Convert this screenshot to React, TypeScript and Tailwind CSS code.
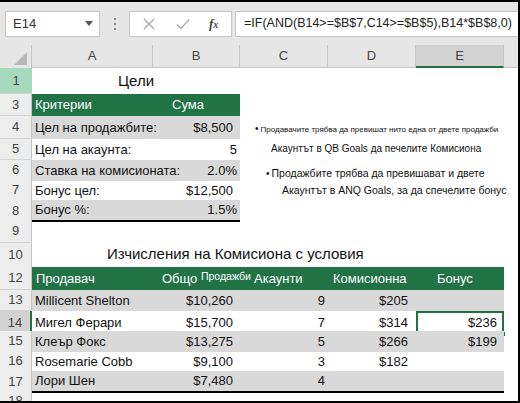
import React from "react";

const FONT = "font-['Liberation_Sans',Arial,sans-serif]";
const GRAY = "bg-[#d9d9d9]";

type HeadKind = "none" | "green" | "sel";

function RowHead({ n, kind = "none" }: { n: number | string; kind?: HeadKind }) {
  const bg =
    kind === "green" ? "bg-[#a6d9bd]" : kind === "sel" ? "bg-[#d2d2d2] border-r-2 border-r-[#217346]" : "bg-[#ededed] border-r border-r-[#c6c6c6]";
  return (
    <div className={`flex items-center justify-center border-b border-b-[#d4d4d4] text-[13px] text-[#444] ${bg}`}>
      {n}
    </div>
  );
}

function Row({ n, h, kind, children }: { n: number | string; h: string; kind?: HeadKind; children?: React.ReactNode }) {
  return (
    <div className={`grid grid-cols-[32px_472px_1fr] ${h}`}>
      <RowHead n={n} kind={kind} />
      <div className="relative flex">{children}</div>
      <div />
    </div>
  );
}

function Goal({ label, value, gray, last, cur }: { label: string; value: string; gray?: boolean; last?: boolean; cur?: boolean }) {
  return (
    <div
      className={`grid w-[208px] grid-cols-[121px_87px] items-center text-[13px] text-[#111] ${gray ? GRAY : ""} ${
        last ? "border-b-2 border-b-black" : ""
      }`}
    >
      <span className="whitespace-nowrap pl-[3px]">{label}</span>
      <span className={`text-right ${cur ? "pr-[7px]" : "pr-[3px]"}`}>{value}</span>
    </div>
  );
}

function Sale({
  name,
  total,
  acc,
  com,
  bonus,
  gray,
  last,
  selected,
}: {
  name: string;
  total: string;
  acc: string;
  com?: string;
  bonus?: string;
  gray?: boolean;
  last?: boolean;
  selected?: boolean;
}) {
  return (
    <div
      className={`grid w-[472px] grid-cols-[121px_87px_88px_88px_88px] items-center text-[13px] text-[#111] ${gray ? GRAY : ""} ${
        last ? "border-b-2 border-b-black" : ""
      }`}
    >
      <span className="whitespace-nowrap pl-[3px]">{name}</span>
      <span className="pr-[7px] text-right">{total}</span>
      <span className="pr-[3px] text-right">{acc}</span>
      <span className="pr-[8px] text-right">{com}</span>
      {selected ? (
        <span className="relative flex h-full items-center justify-end border-2 border-[#217346] pr-[5px]">
          {bonus}
          <span className="absolute -bottom-[4px] -right-[4px] h-[6px] w-[6px] border border-white bg-[#217346]" />
        </span>
      ) : (
        <span className="pr-[7px] text-right">{bonus}</span>
      )}
    </div>
  );
}

function Toolbar() {
  return (
    <div className="flex h-[43px] items-center bg-[#e6e6e6] pl-[5px]">
      <div className="flex h-[26px] w-[95px] items-center justify-between border border-[#c8c8c8] bg-white pl-[7px] pr-[6px] text-[13px] text-[#333]">
        <span>E14</span>
        <svg width="8" height="5" viewBox="0 0 8 5">
          <polygon points="0,0 8,0 4,5" fill="#555" />
        </svg>
      </div>
      <div className="flex w-[29px] flex-col items-center gap-[3px]">
        <span className="h-[2px] w-[2px] bg-[#888]" />
        <span className="h-[2px] w-[2px] bg-[#888]" />
        <span className="h-[2px] w-[2px] bg-[#888]" />
      </div>
      <div className="flex h-[26px] w-[103px] items-center border border-[#c8c8c8] bg-white">
        <svg className="ml-[13px]" width="12" height="12" viewBox="0 0 12 12">
          <path d="M1 1 L11 11 M11 1 L1 11" stroke="#a8a8a8" strokeWidth="1.3" />
        </svg>
        <svg className="ml-[21px]" width="14" height="12" viewBox="0 0 14 12">
          <path d="M1 6.5 L5 10.5 L13 1.5" stroke="#a8a8a8" strokeWidth="1.3" fill="none" />
        </svg>
        <span className="ml-[19px] font-['Liberation_Serif',serif] text-[13px] font-bold italic text-[#444]">
          f<span className="text-[10px]">x</span>
        </span>
      </div>
      <div className="ml-[3px] flex h-[26px] flex-1 items-center border border-r-0 border-[#c8c8c8] bg-white pl-[8px] text-[12.5px] text-[#222] whitespace-nowrap overflow-hidden">
        =IF(AND(B14&gt;=$B$7,C14&gt;=$B$5),B14*$B$8,0)
      </div>
    </div>
  );
}

function ColHeads() {
  const cols = [
    { l: "A", w: "w-[121px]" },
    { l: "B", w: "w-[87px]" },
    { l: "C", w: "w-[88px]" },
    { l: "D", w: "w-[88px]" },
    { l: "E", w: "w-[88px]", sel: true },
  ];
  return (
    <div className="flex h-[23px] bg-[#e6e6e6] text-[13px] text-[#444]">
      <div className="relative w-[32px] border-r border-r-[#c6c6c6]">
        <svg className="absolute bottom-[3px] right-[4px]" width="13" height="13" viewBox="0 0 13 13">
          <polygon points="13,0 13,13 0,13" fill="#b8b8b8" />
        </svg>
      </div>
      {cols.map((c) => (
        <div
          key={c.l}
          className={`flex items-center justify-center border-r border-r-[#c6c6c6] ${c.w} ${
            c.sel ? "border-b-2 border-b-[#217346] bg-[#d2d2d2]" : "border-b border-b-[#c6c6c6]"
          }`}
        >
          {c.l}
        </div>
      ))}
      <div className="flex-1 border-b border-b-[#c6c6c6]" />
    </div>
  );
}

export default function App() {
  return (
    <div className={`h-[403px] w-[520px] overflow-hidden border-r-2 border-t-2 border-b-2 border-black bg-white ${FONT}`}>
      <Toolbar />
      <ColHeads />
      <div className="relative">
        <Row n={1} h="h-[26px]" kind="green">
          <div className="flex w-[208px] items-end justify-center pb-[2px] text-[15px] text-[#111]">Цели</div>
        </Row>
        <Row n={3} h="h-[22px]">
          <div className="flex w-[208px] items-end bg-[#217346] pb-[2px] text-[13px] text-white">
            <span className="w-[121px] pl-[3px]">Критерии</span>
            <span className="pl-[19px]">Сума</span>
          </div>
        </Row>
        <Row n={4} h="h-[23px]">
          <Goal label="Цел на продажбите:" value="$8,500" gray cur />
        </Row>
        <Row n={5} h="h-[21px]">
          <Goal label="Цел на акаунта:" value="5" />
        </Row>
        <Row n={6} h="h-[20px]">
          <Goal label="Ставка на комисионата:" value="2.0%" gray />
        </Row>
        <Row n={7} h="h-[20px]">
          <Goal label="Бонус цел:" value="$12,500" cur />
        </Row>
        <Row n={8} h="h-[20px]">
          <Goal label="Бонус %:" value="1.5%" gray last />
        </Row>
        <Row n={9} h="h-[23px]" />
        <Row n={10} h="h-[24px]">
          <div className="flex w-[472px] items-end pb-[2px] pl-[75px] text-[15px] text-[#111] whitespace-nowrap">
            Изчисления на Комисиона с условия
          </div>
        </Row>
        <Row n={12} h="h-[23px]">
          <div className="flex w-[472px] items-end bg-[#217346] pb-[2px] text-[13px] text-white whitespace-nowrap">
            <span className="w-[121px] shrink-0 pl-[4px]">Продавач</span>
            <span className="w-[87px] shrink-0 overflow-visible pl-[9px]">
              Общо <span className="relative -top-[3px] text-[10.5px]">Продажби</span>
            </span>
            <span className="w-[88px] shrink-0 pl-[14px]">Акаунти</span>
            <span className="w-[88px] shrink-0 pl-[5px]">Комисионна</span>
            <span className="w-[88px] shrink-0 pl-[21px]">Бонус</span>
          </div>
        </Row>
        <Row n={13} h="h-[21px]">
          <Sale name="Millicent Shelton" total="$10,260" acc="9" com="$205" gray />
        </Row>
        <Row n={14} h="h-[20px]" kind="sel">
          <Sale name="Мигел Ферари" total="$15,700" acc="7" com="$314" bonus="$236" selected />
        </Row>
        <Row n={15} h="h-[20px]">
          <Sale name="Клеър Фокс" total="$13,275" acc="5" com="$266" bonus="$199" gray />
        </Row>
        <Row n={16} h="h-[20px]">
          <Sale name="Rosemarie Cobb" total="$9,100" acc="3" com="$182" />
        </Row>
        <Row n={17} h="h-[20px]">
          <Sale name="Лори Шен" total="$7,480" acc="4" gray last />
        </Row>
        <Row n={18} h="h-[20px]" />

        <div className="absolute left-[255px] top-[54px] text-[#111]">
          <div className="whitespace-nowrap text-[8px] leading-[14px]">
            <span className="mr-[2px] text-[10px]">•</span>Продавачите трябва да превишат нито една от двете продажби
          </div>
          <div className="mt-[5px] whitespace-nowrap pl-[16px] text-[10px] leading-[14px]">Акаунтът в QB Goals да печелите Комисиона</div>
          <div className="mt-[10px] whitespace-nowrap pl-[11px] text-[10.5px] leading-[14px]">
            <span className="mr-[2px] text-[10px]">•</span>Продажбите трябва да превишават и двете
          </div>
          <div className="mt-[2px] whitespace-nowrap pl-[27px] text-[10.5px] leading-[14px]">Акаунтът в ANQ Goals, за да спечелите бонус</div>
        </div>
      </div>
    </div>
  );
}
